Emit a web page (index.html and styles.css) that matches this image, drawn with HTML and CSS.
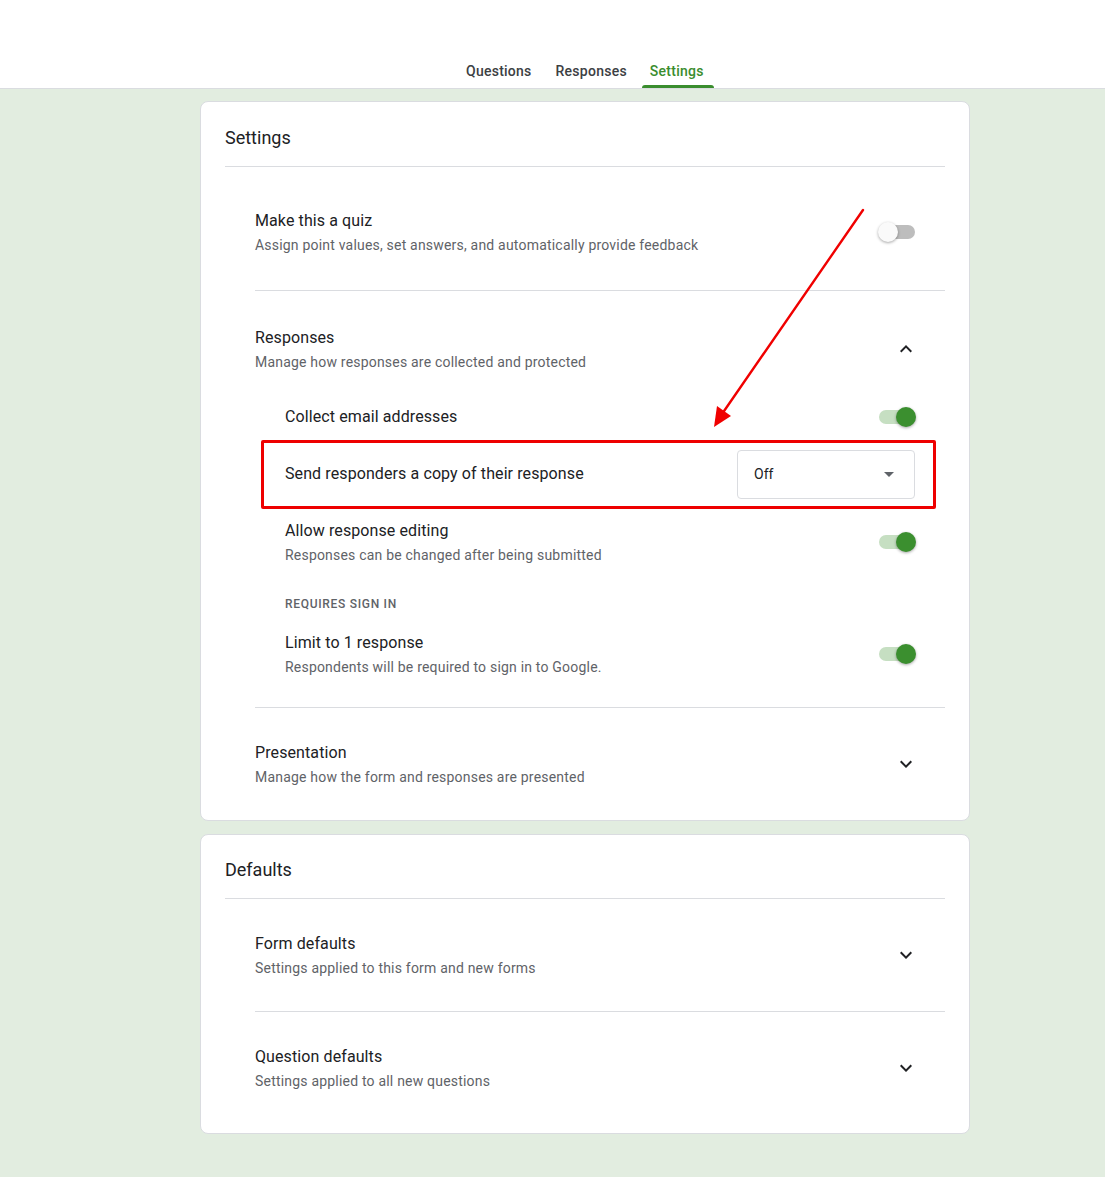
FILE: index.html
```html
<!DOCTYPE html>
<html>
<head>
<meta charset="utf-8">
<link rel="stylesheet" href="styles.css">
</head>
<body>
<header class="topbar">
  <nav class="tabs">
    <a class="tab">Questions</a>
    <a class="tab">Responses</a>
    <a class="tab active">Settings</a>
  </nav>
</header>
<main class="page">
  <section class="card">
    <h2 class="card-title">Settings</h2>
    <div class="section first">
      <div class="row">
        <div class="text">
          <div class="label">Make this a quiz</div>
          <div class="desc">Assign point values, set answers, and automatically provide feedback</div>
        </div>
        <span class="toggle"></span>
      </div>
    </div>
    <div class="section responses">
      <div class="row">
        <div class="text">
          <div class="label">Responses</div>
          <div class="desc">Manage how responses are collected and protected</div>
        </div>
        <svg class="chev" viewBox="0 0 24 24"><path d="M12 8l-6 6 1.41 1.41L12 10.83l4.59 4.58L18 14z"/></svg>
      </div>
      <div class="sub">
        <div class="row sub-email">
          <div class="label">Collect email addresses</div>
          <span class="toggle on"></span>
        </div>
        <div class="row sub-copy highlighted">
          <div class="label">Send responders a copy of their response</div>
          <div class="select"><span>Off</span><span class="caret"></span></div>
        </div>
        <div class="row sub-edit">
          <div class="text">
            <div class="label">Allow response editing</div>
            <div class="desc">Responses can be changed after being submitted</div>
          </div>
          <span class="toggle on"></span>
        </div>
        <div class="caption">REQUIRES SIGN IN</div>
        <div class="row sub-limit">
          <div class="text">
            <div class="label">Limit to 1 response</div>
            <div class="desc">Respondents will be required to sign in to Google.</div>
          </div>
          <span class="toggle on"></span>
        </div>
      </div>
    </div>
    <div class="section last">
      <div class="row">
        <div class="text">
          <div class="label">Presentation</div>
          <div class="desc">Manage how the form and responses are presented</div>
        </div>
        <svg class="chev" viewBox="0 0 24 24"><path d="M16.59 8.59L12 13.17 7.41 8.59 6 10l6 6 6-6z"/></svg>
      </div>
    </div>
  </section>

  <section class="card">
    <h2 class="card-title">Defaults</h2>
    <div class="section">
      <div class="row">
        <div class="text">
          <div class="label">Form defaults</div>
          <div class="desc">Settings applied to this form and new forms</div>
        </div>
        <svg class="chev" viewBox="0 0 24 24"><path d="M16.59 8.59L12 13.17 7.41 8.59 6 10l6 6 6-6z"/></svg>
      </div>
    </div>
    <div class="section last2">
      <div class="row">
        <div class="text">
          <div class="label">Question defaults</div>
          <div class="desc">Settings applied to all new questions</div>
        </div>
        <svg class="chev" viewBox="0 0 24 24"><path d="M16.59 8.59L12 13.17 7.41 8.59 6 10l6 6 6-6z"/></svg>
      </div>
    </div>
  </section>
</main>
<svg class="arrow" width="1105" height="1177" viewBox="0 0 1105 1177">
  <line x1="863" y1="210" x2="722" y2="414" stroke="#f00000" stroke-width="2.4" stroke-linecap="round"/>
  <polygon points="714,427 717,406 731,416" fill="#f00000"/>
</svg>
</body>
</html>
```

FILE: styles.css
```css
* { box-sizing: border-box; }
html, body { margin: 0; padding: 0; }
body {
  background: #e2ede0;
  font-family: Roboto, "Noto Sans", Arial, sans-serif;
  color: #202124;
  overflow: hidden;
  position: relative;
  min-height: 1177px;
}
.topbar {
  background: #fff;
  height: 89px;
  border-bottom: 1px solid #dadce0;
  display: flex;
  justify-content: flex-start;
  align-items: flex-end;
  padding-left: 454px;
}
.tabs { display: flex; }
.tab {
  position: relative;
  height: 36px;
  line-height: 38px;
  padding: 0 12px;
  font-size: 14px;
  font-weight: 500;
  color: #3c4043;
  letter-spacing: 0.25px;
}
.tab.active { color: #3a8d2e; padding-left: 11px; }
.tab.active::after {
  content: "";
  position: absolute;
  left: 3px; right: 2px; bottom: 0;
  height: 3px;
  background: #3a8d2e;
  border-radius: 3px 3px 0 0;
}
.page {
  padding: 12px 0 0 200px;
  display: flex;
  flex-direction: column;
  align-items: flex-start;
  gap: 13px;
}
.card {
  width: 770px;
  background: #fff;
  border: 1px solid #dadce0;
  border-radius: 8px;
  padding: 0 24px 0 24px;
}
.card-title {
  margin: 0;
  height: 65px;
  line-height: 72px;
  font-size: 18px;
  font-weight: 400;
  color: #202124;
  border-bottom: 1px solid #dadce0;
}
.card + .card .card-title { height: 64px; line-height: 70px; }
.section {
  margin-left: 30px;
  padding: 33px 0 33px;
  border-bottom: 1px solid #dadce0;
}
.section.first { padding-top: 42px; padding-bottom: 35px; }
.section.responses { padding-top: 35px; padding-bottom: 30px; }
.section.last { border-bottom: none; padding-bottom: 33px; }
.section.last2 { border-bottom: none; padding-bottom: 42px; }
.row {
  display: flex;
  align-items: center;
  justify-content: space-between;
  padding-right: 30px;
}
.label {
  font-size: 16px;
  line-height: 24px;
  letter-spacing: 0.1px;
  color: #202124;
}
.desc {
  font-size: 14px;
  line-height: 20px;
  margin-top: 2px;
  letter-spacing: 0.2px;
  color: #5f6368;
}
.chev {
  width: 24px;
  height: 24px;
  fill: #202124;
  margin-right: -3px;
}
.toggle {
  position: relative;
  width: 36px;
  height: 14px;
  border-radius: 7px;
  background: #bdbdbd;
  flex: none;
}
.toggle::after {
  content: "";
  position: absolute;
  left: -1px; top: -3px;
  width: 20px; height: 20px;
  border-radius: 50%;
  background: #fafafa;
  box-shadow: 0 1px 3px rgba(0,0,0,0.35);
}
.toggle.on { background: #c6dfc2; }
.toggle.on::after {
  left: auto; right: -1px;
  background: #3b8f2f;
}
.sub { margin-left: 30px; }
.sub-email { margin-top: 33px; }
.sub-copy {
  position: relative;
  height: 68px;
  margin-top: 11px;
}
.highlighted::before {
  content: "";
  position: absolute;
  left: -24px; right: 9px; top: 0; bottom: -1px;
  border: 3px solid #ee0000;
  border-radius: 2px;
  pointer-events: none;
}
.select {
  width: 178px;
  height: 49px;
  border: 1px solid #dadce0;
  border-radius: 4px;
  display: flex;
  align-items: center;
  justify-content: space-between;
  padding: 0 20px 0 16px;
  font-size: 14px;
  color: #202124;
}
.caret {
  width: 0; height: 0;
  border-left: 5px solid transparent;
  border-right: 5px solid transparent;
  border-top: 5px solid #5f6368;
}
.sub-edit { margin-top: 11px; }
.caption {
  margin-top: 31px;
  font-size: 12px;
  line-height: 16px;
  font-weight: 500;
  letter-spacing: 0.7px;
  color: #5f6368;
}
.sub-limit { margin-top: 19px; }
.arrow {
  position: absolute;
  left: 0; top: 0;
  pointer-events: none;
}
```
